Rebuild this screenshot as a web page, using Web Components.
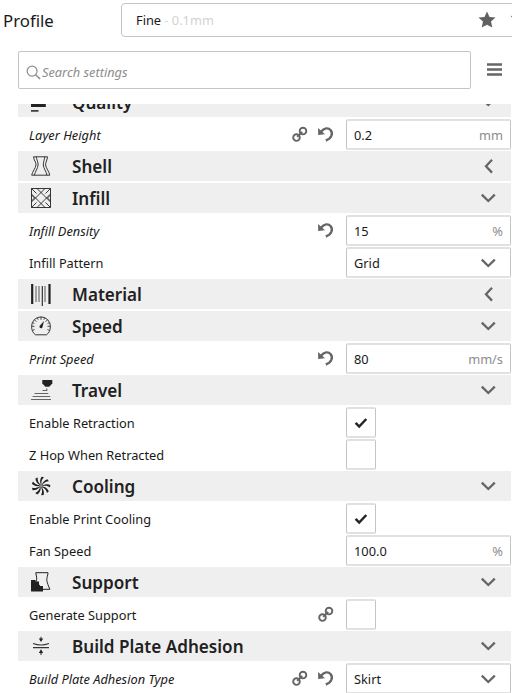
<!DOCTYPE html>
<html lang="en"><head><meta charset="utf-8"><title>Print settings</title>
<style>
html,body{margin:0;height:693px;overflow:hidden;background:#fff;font-family:"Noto Sans",sans-serif}
</style></head><body>
<settings-app></settings-app>
<script>
const ICONS = {
  star:['0 0 20 20','<path fill="#606060" d="M10 1.500l2.500 5.400 6 .6-4.500 4.100 1.300 6L10 14.700l-5.300 2.900 1.300-6L1.500 7.500l6-.6z"/>'],
  search:['0 0 16 16','<circle cx="6.500" cy="6.500" r="5.300" fill="none" stroke="#8c8c8c" stroke-width="1.300"/><path d="M10.300 10.300l4.700 4.700" stroke="#8c8c8c" stroke-width="1.600"/>'],
  menu:['0 0 15 13','<path d="M0 1.500h15M0 6.500h15M0 11.500h15" stroke="#666" stroke-width="2.500"/>'],
  down:['0 0 16 16','<path d="M1.800 4.700L8.300 11l6.500-6.300" fill="none" stroke="#666" stroke-width="2.300"/>'],
  left:['0 0 16 16','<path d="M12 1.800L6 8.200l6 6.400" fill="none" stroke="#666" stroke-width="2.300"/>'],
  link:['0 0 16 16','<g fill="none" stroke="#666" stroke-width="1.900"><circle cx="4.500" cy="11.600" r="3.300"/><circle cx="11" cy="5.100" r="3.300"/><path d="M5.200 10.900l5-5" stroke-width="1.900"/></g>'],
  undo:['0 0 16 16','<path d="M3 5.800C6 1.800 10.300 1.300 12.700 4.300c2.600 3.300.8 8.200-4.900 10.200" fill="none" stroke="#666" stroke-width="2.400"/><path d="M.1 2V9L7 8.200z" fill="#666"/>'],
  check:['0 0 14 12','<path d="M1.600 5.800L5.200 9.500 12.300 2" fill="none" stroke="#252525" stroke-width="2.500"/>'],
  quality:['0 0 20 20','<path d="M0 5.500h20" stroke="#222" stroke-width="4"/><path d="M0 13h14.800" stroke="#222" stroke-width="4"/><path d="M0 18.900h7.500" stroke="#222" stroke-width="1.500"/>'],
  shell:['0 0 20 20','<g fill="none" stroke="#222" stroke-width=".9"><path d="M2.500.8h14c-.1 3-2.200 5.800-1.900 8.200.3 3 3.600 6.600 4.200 10.200H.7C1.300 15.600 4.700 12 5 9 5.300 6.600 2.800 4 2.500.8z"/><path d="M5.300.8c.1 2.600 2 5.200 1.800 8.200-.1 3-3.200 7-3.700 10.200M13.800.8c-.1 2.600-1.700 5.200-1.500 8.200.1 3 3.200 7 3.700 10.200"/></g>'],
  infill:['0 0 20 20','<g fill="none" stroke="#222" stroke-width=".9"><path d="M.5.5h19v19H.5z"/><path d="M14 .5L.5 14M19.500 6L6 19.500M6 .5L19.500 14M.5 6L14 19.500M.5.5l5 5M19.500.5l-5 5M.5 19.500l5-5M19.500 19.500l-5-5M.5 7l3 3-3 3M19.500 7l-3 3 3 3" stroke-width=".9"/></g>'],
  material:['0 0 20 24','<path d="M1.200 1v20M18.500 1v20" stroke="#222" stroke-width="2.200"/><path d="M5 3v16M8 3v16M14 3v16" stroke="#555" stroke-width="1"/><path d="M11.300 3v20" stroke="#222" stroke-width="1.100"/>'],
  speed:['0 0 20 20','<path d="M4.500 18.800C1.800 17 .6 14 .6 10.300a9.400 9.400 0 1118.800 0c0 3.700-1.200 6.700-3.900 8.500z" fill="none" stroke="#222" stroke-width=".9"/><path d="M.6 10.300h2.900M16.500 10.300h2.900M10 .9v2.900M3.400 3.700l2 2M16.600 3.700l-2 2M6.300 1.800l.8 1.900M13.700 1.800l-.8 1.900M1.500 6.600l1.900.8M18.500 6.600l-1.900.8M1.700 14.300l1.900-.8M18.300 14.300l-1.900-.8" stroke="#222" stroke-width=".8"/><path d="M13 5L11.600 10.600a1.600 1.600 0 11-2.600-1.200z" fill="#222"/>'],
  travel:['0 0 20 20','<path d="M11.300 0h10v3.600L18.200 6.700h-3.800L11.300 3.600z" fill="#222"/><path d="M11.500 10.500h4.300V8.500M3.600 13.500h13.700M1.600 16.500h17.700M0 19.500h20" stroke="#666" stroke-width="1.100" fill="none"/>'],
  cooling:['0 0 22 22','<circle cx="11" cy="11" r="2.500" fill="#888"/><g fill="#222">'+Array.from({length:9},(_,i)=>'<path d="M10.700 9.200C9.600 6 9.900 3.300 11.600.7l2.700.8C12.100 3.500 11.300 6 11.400 9z" transform="rotate('+(i*40)+' 11 11)"/>').join('')+'</g>'],
  support:['0 0 20 20','<path d="M4.800.7H17c-.1 3-1.500 5-1.200 7.600.3 2.400 1.700 6 3.100 9h-7L5 9.500C6.600 6.500 5.100 4 4.800.7z" fill="#efefef" stroke="#222" stroke-width="1"/><path d="M0 8h4.500v1.500H8V14h4v5.500H0z" fill="#222"/>'],
  adhesion:['0 0 18 20','<path d="M1 7.500Q9 10.500 17 7.500M1 11.600h16" fill="none" stroke="#333" stroke-width="1.100"/><path d="M9 .8v2.500M9 16v3" stroke="#222" stroke-width="1"/><path d="M6.800 2.600h4.400L9 6zM6.800 17h4.400L9 13.300z" fill="#222"/>']
};

class UiIcon extends HTMLElement {
  connectedCallback(){
    const [box,body]=ICONS[this.getAttribute('name')];
    this.attachShadow({mode:'open'}).innerHTML=`<style>:host{display:block;flex:none;width:16px;height:16px}svg{display:block;width:100%;height:100%;overflow:visible}</style><svg viewBox="${box}" aria-hidden="true">${body}</svg>`;
  }
}
customElements.define('ui-icon',UiIcon);

class ProfileBar extends HTMLElement {
  connectedCallback(){
    this.attachShadow({mode:'open'}).innerHTML=`<style>
    :host{display:flex;padding-top:3px;height:34px;color:#191919;flex:none}
    .name{width:118px;padding-left:3px;box-sizing:border-box;font-size:16.800px;line-height:36px;height:34px;flex:none}
    .box{margin-left:3px;width:410px;flex:none;box-sizing:border-box;height:34px;border:1px solid #c4c4c4;border-radius:4px;padding:0 0 0 14px;display:flex;align-items:center;font-size:12.800px;white-space:pre}
    .muted{color:#d2d2d2;flex:1}
    .star{width:20px;height:20px;margin-right:13px}
    .more{width:16px;height:16px;margin:-3px 4px 0 0}
    </style><div class="name"><slot></slot></div><div class="box"><span>Fine</span><span class="muted"> - 0.1mm</span><ui-icon class="star" name="star"></ui-icon><ui-icon class="more" name="down"></ui-icon></div>`;
  }
}
customElements.define('profile-bar',ProfileBar);

class SearchBar extends HTMLElement {
  connectedCallback(){
    this.attachShadow({mode:'open'}).innerHTML=`<style>
    :host{display:flex;align-items:center;margin:14px 0 0 18px;flex:none;height:38px}
    .field{box-sizing:border-box;width:453px;height:38px;border:1px solid #c4c4c4;border-radius:2px;display:flex;align-items:center;font-size:12.800px;font-style:italic;color:#8c8c8c;padding:4px 0 0 7px;gap:1px}
    .field ui-icon{width:15px;height:15px}
    .menu{width:15px;height:13px;margin:-1px 0 0 16px}
    </style><div class="field"><ui-icon name="search"></ui-icon><slot></slot></div><ui-icon class="menu" name="menu"></ui-icon>`;
  }
}
customElements.define('search-bar',SearchBar);

class SettingSection extends HTMLElement {
  connectedCallback(){
    const n=this.getAttribute('icon');
    this.attachShadow({mode:'open'}).innerHTML=`<style>
    :host{display:grid;grid-template-columns:20px 1fr 14px;column-gap:21px;align-items:center;box-sizing:border-box;width:493px;height:30px;padding:0 16px 0 13px;background:#efefef;color:#212121;font-size:17.100px;font-weight:600;line-height:32px;flex:none}
    .icon{width:20px;height:20px}
    span{height:30px}
    .material{height:24px;margin-top:2px}
    .adhesion{width:18px;margin-left:1px}
    .arrow{width:16px;height:16px;margin-left:-1px}
    </style><ui-icon class="icon ${n}" name="${n}"></ui-icon><span><slot></slot></span><ui-icon class="arrow" name="${this.hasAttribute('closed')?'left':'down'}"></ui-icon>`;
  }
}
customElements.define('setting-section',SettingSection);

class SettingRow extends HTMLElement {
  connectedCallback(){
    const a=k=>this.getAttribute(k), h=k=>this.hasAttribute(k);
    let control;
    if(h('select')) control=`<div class="box"><span>${a('select')}</span><ui-icon class="arrow" name="down"></ui-icon></div>`;
    else if(h('check')) control=`<div class="box tick">${a('check')==='on'?'<ui-icon name="check"></ui-icon>':''}</div>`;
    else control=`<div class="box"><span>${a('value')}</span><span class="unit">${a('unit')}</span></div>`;
    this.attachShadow({mode:'open'}).innerHTML=`<style>
    :host{display:flex;align-items:flex-start;box-sizing:border-box;width:493px;height:30px;padding-left:11px;flex:none;color:#191919;font-size:12.800px;line-height:32px;white-space:nowrap}
    :host([changed]) .label{font-style:italic}
    .label{width:250px;flex:none}
    .icons{width:55px;display:flex;justify-content:flex-end;gap:10px;padding-top:7px;flex:none}
    .box{margin-left:12px;width:165px;height:31px;box-sizing:border-box;background:#fff;border:solid;border-width:2px 1px;border-color:#e1e1e1 #c4c4c4;border-radius:2px;padding:0 7px;display:flex;align-items:center;justify-content:space-between;line-height:27px}
    .box span{height:27px;line-height:29px}
    .unit{color:#8c8c8c}
    .arrow{margin-right:7px}
    .tick{width:30px;padding:0;justify-content:center}
    .tick ui-icon{width:14px;height:12px}
    </style><div class="label"><slot></slot></div><div class="icons">${h('linked')?'<ui-icon name="link"></ui-icon>':''}${h('changed')?'<ui-icon name="undo"></ui-icon>':''}</div>${control}`;
  }
}
customElements.define('setting-row',SettingRow);

class SettingsApp extends HTMLElement {
  connectedCallback(){
    this.attachShadow({mode:'open'}).innerHTML=`<style>
    :host{display:flex;flex-direction:column;width:512px;height:693px;overflow:hidden}
    .list{margin:15px 0 0 18px;height:589px;flex:none;overflow:hidden;display:flex;flex-direction:column;gap:2px}
    .list>:first-child{margin-top:-17px}
    </style>
    <profile-bar>Profile</profile-bar>
    <search-bar>Search settings</search-bar>
    <div class="list">
      <setting-section icon="quality">Quality</setting-section>
      <setting-row changed linked value="0.2" unit="mm">Layer Height</setting-row>
      <setting-section icon="shell" closed>Shell</setting-section>
      <setting-section icon="infill">Infill</setting-section>
      <setting-row changed value="15" unit="%">Infill Density</setting-row>
      <setting-row select="Grid">Infill Pattern</setting-row>
      <setting-section icon="material" closed>Material</setting-section>
      <setting-section icon="speed">Speed</setting-section>
      <setting-row changed value="80" unit="mm/s">Print Speed</setting-row>
      <setting-section icon="travel">Travel</setting-section>
      <setting-row check="on">Enable Retraction</setting-row>
      <setting-row check="off">Z Hop When Retracted</setting-row>
      <setting-section icon="cooling">Cooling</setting-section>
      <setting-row check="on">Enable Print Cooling</setting-row>
      <setting-row value="100.0" unit="%">Fan Speed</setting-row>
      <setting-section icon="support">Support</setting-section>
      <setting-row linked check="off">Generate Support</setting-row>
      <setting-section icon="adhesion">Build Plate Adhesion</setting-section>
      <setting-row changed linked select="Skirt">Build Plate Adhesion Type</setting-row>
    </div>`;
  }
}
customElements.define('settings-app',SettingsApp);
</script></body></html>
